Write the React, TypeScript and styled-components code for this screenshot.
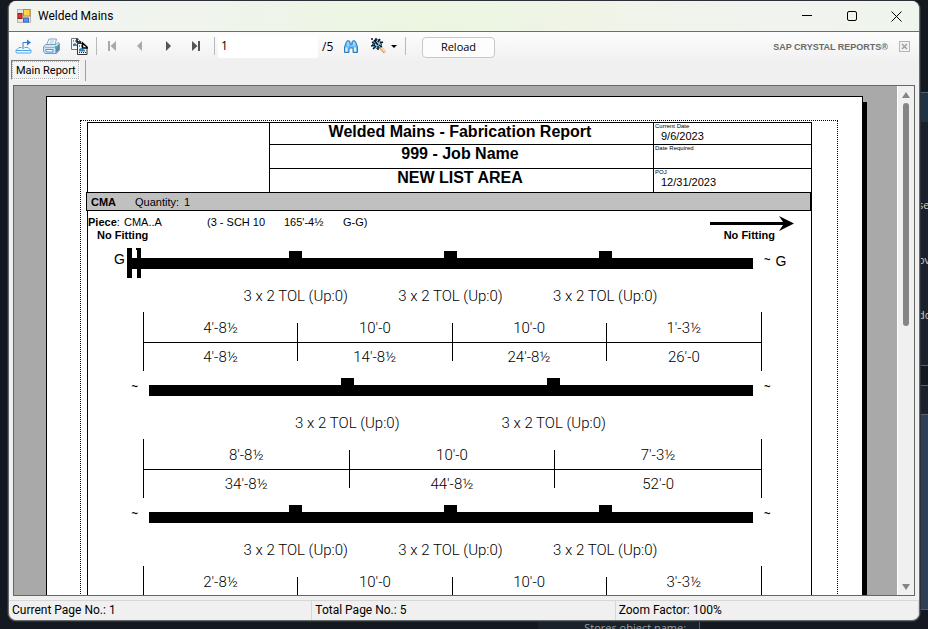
import React from "react";
import styled, { createGlobalStyle, css } from "styled-components";

const GlobalStyle = createGlobalStyle`
  *, *::before, *::after { box-sizing: border-box; }
  body {
    margin: 0;
    overflow: hidden;
    font-family: "Open Sans", "Noto Sans", sans-serif;
    font-size: 12px;
    color: #000;
  }
  button, input { font: inherit; color: inherit; }
`;

/* ---------- desktop and the windows behind ---------- */

const Desktop = styled.div`
  position: relative;
  height: 100vh;
  padding: 1px 8px 8px;
  overflow: hidden;
  background: #141820;
`;

const BehindRight = styled.div`
  position: absolute;
  top: 0;
  right: 0;
  bottom: 0;
  width: 12px;
  display: flex;
  flex-direction: column;
  font-size: 11px;
  line-height: 14px;
  color: #c9ced6;
`;

const BehindBand = styled.div<{ $h?: number; $bg: string; $line?: boolean }>`
  flex: ${(p) => (p.$h ? `0 0 ${p.$h}px` : "1 1 0")};
  background: ${(p) => p.$bg};
  border-top: ${(p) => (p.$line ? "1px solid #55606f" : "0")};
  overflow: hidden;
`;

const BehindWord = styled.div`
  margin-top: 41px;
  padding-left: 2px;
  white-space: nowrap;
  &:first-child { margin-top: 76px; }
`;

const BehindBottom = styled.div`
  position: absolute;
  left: 58%;
  bottom: 0;
  width: 162px;
  height: 8px;
  padding-left: 46px;
  overflow: hidden;
  background: #1b212b;
  border-right: 1px solid #55606f;
  color: #9aa0a8;
  font-size: 11px;
  line-height: 13px;
`;

/* ---------- window frame ---------- */

const Window = styled.main`
  position: relative;
  height: 100%;
  display: flex;
  flex-direction: column;
  overflow: hidden;
  background: #f0f0f0;
  border: 1px solid #666a68;
  border-top: 0;
  border-radius: 8px;
  box-shadow: 0 0 0 1px #2c3038;
`;

const TitleBar = styled.header`
  flex: 0 0 31px;
  display: flex;
  align-items: center;
  padding-left: 8px;
  background: linear-gradient(90deg, #f2f4f0 0%, #f0f4ed 22%, #ecf6e1 45%, #f0f4e8 65%, #f1f3ef 85%, #eff5ec 100%);
  border-bottom: 1px solid #6b706b;
`;

const Title = styled.h1`
  flex: 1;
  margin: 0 0 0 7px;
  font: 400 12px Roboto, "Open Sans", sans-serif;
`;

const CaptionButton = styled.button`
  width: 45px;
  height: 30px;
  padding: 0;
  display: grid;
  place-items: center;
  border: 0;
  background: none;
`;

const ToolBar = styled.div`
  flex: 0 0 28px;
  display: flex;
  align-items: center;
  padding: 0 9px 0 6px;
  background: linear-gradient(#fdfdfd, #f1f1f1);
`;

const ToolButton = styled.button<{ $w?: number }>`
  width: ${(p) => p.$w ?? 28}px;
  height: 26px;
  padding: 0;
  display: grid;
  place-items: center start;
  border: 0;
  background: none;
`;

const Separator = styled.span<{ $after: number }>`
  width: 1px;
  height: 18px;
  margin-right: ${(p) => p.$after}px;
  background: #b9b9b9;
`;

const PageInput = styled.input`
  width: 100px;
  height: 23px;
  padding: 0 3px 2px;
  border: 0;
  outline: 0;
  background: #fff;
`;

const PageTotal = styled.span`
  width: 26px;
  padding-left: 4px;
`;

const ReloadButton = styled.button`
  width: 73px;
  height: 21px;
  margin: 2px 0 0;
  padding: 0;
  font-size: 11px;
  line-height: 18px;
  border: 1px solid #c8c8c8;
  border-radius: 4px;
  background: #fdfdfd;
`;

const Brand = styled.span`
  margin-left: auto;
  padding-top: 2px;
  font: 700 9px "Liberation Sans", Arial, sans-serif;
  color: #6a6a6a;
`;

const CloseView = styled.button`
  width: 11px;
  height: 11px;
  margin-left: 11px;
  padding: 0;
  display: grid;
  border: 0;
  background: none;
`;

const TabRow = styled.div`
  flex: 0 0 25px;
  display: flex;
  align-items: flex-start;
  gap: 5px;
  padding-left: 2px;
`;

const Tab = styled.button`
  height: 20px;
  padding: 1px 3px 0 4px;
  font: 400 11px Roboto, "Open Sans", sans-serif;
  line-height: 18px;
  border: 1px solid;
  border-color: #7a7a7a #fff #fff #7a7a7a;
  outline: 1px dotted #b5b5b5;
  outline-offset: -2px;
  background: #f4f4f4;
`;

const TabDivider = styled.span`
  width: 1px;
  height: 21px;
  background: #a0a0a0;
`;

/* ---------- viewer ---------- */

const Viewer = styled.section`
  flex: 1 1 0;
  min-height: 0;
  margin: 0 4px 4px;
  display: flex;
  overflow: hidden;
  border: 1px solid #646864;
`;

const Canvas = styled.div`
  flex: 1;
  min-width: 0;
  overflow: hidden;
  padding: 10px 34px 0 32px;
  background: #a9a9a9;
`;

const ScrollBar = styled.div`
  flex: 0 0 17px;
  display: flex;
  flex-direction: column;
  align-items: center;
  background: #f0f0f0;
  border-left: 1px solid #fff;
`;

const ScrollButton = styled.button`
  width: 16px;
  height: 17px;
  padding: 0;
  display: grid;
  place-items: center;
  border: 0;
  background: none;
`;

const ScrollTrack = styled.div`
  flex: 1;
  width: 6px;
`;

const ScrollThumb = styled.div`
  height: 47%;
  border-radius: 3px;
  background: #858585;
`;

const Paper = styled.article`
  padding: 23px 24px 40px 33px;
  background: #fff;
  border: 1px solid #000;
  box-shadow: 4px 6px 0 #000;
  font-family: "Liberation Sans", Arial, sans-serif;
`;

const Margins = styled.div`
  padding: 1px 25px 0 6px;
  border: 1px dotted #000;
`;

const Report = styled.div`
  border: 1px solid #000;
`;

const ReportHeader = styled.header`
  display: grid;
  grid-template-columns: 182fr 384fr 157fr;
  grid-template-rows: 22px 24px 23px;
`;

const LogoCell = styled.div`
  grid-row: 1 / 4;
  border-right: 1px solid #000;
`;

const cellLine = css<{ $last?: boolean }>`
  border-bottom: ${(p) => (p.$last ? 0 : 1)}px solid #000;
`;

const HeadingCell = styled.h2<{ $last?: boolean }>`
  margin: 0;
  padding-right: 3px;
  ${cellLine}
  border-right: 1px solid #000;
  text-align: center;
  font-size: 16px;
  line-height: 17px;
`;

const DateCell = styled.div<{ $last?: boolean }>`
  ${cellLine}
  padding-left: 1px;
  font-size: 11px;
`;

const DateLabel = styled.div`
  font-size: 6px;
  line-height: 7px;
`;

const DateValue = styled.div`
  padding-left: 6px;
  line-height: 12px;
`;

const GroupHeader = styled.div`
  height: 19px;
  margin: 0 0 0 -2px;
  padding-left: 4px;
  display: grid;
  grid-template-columns: 44px 49px 1fr;
  align-items: center;
  font-size: 11px;
  background: #c0c0c0;
  border: 1px solid #000;
`;

const PieceRow = styled.div`
  display: grid;
  grid-template-columns: 36px 83px 77px 59px 1fr auto;
  align-items: start;
  height: 18px;
  padding: 5px 17px 0 0;
  font-size: 11px;
  line-height: 12px;
  white-space: nowrap;
`;

const FittingRow = styled.div`
  display: flex;
  justify-content: space-between;
  height: 22px;
  padding: 0 36px 0 9px;
  font-size: 11px;
  font-weight: 700;
  line-height: 12px;
`;

/* ---------- pipe drawing ---------- */

const Run = styled.section`
  height: 127px;
  font-family: Roboto, "Liberation Sans", sans-serif;
  font-size: 15px;
  font-weight: 300;
`;

const PipeRow = styled.div`
  display: grid;
  grid-template-columns: 53px 1fr 51px;
  grid-template-rows: 18px;
`;

const EndMark = styled.div<{ $side: "left" | "right" }>`
  display: flex;
  justify-content: ${(p) => (p.$side === "left" ? "flex-end" : "flex-start")};
  padding: ${(p) => (p.$side === "left" ? "0 3px 0 0" : "0 0 0 4px")};
  gap: 5px;
  font: 400 14px "Liberation Sans", Arial, sans-serif;
  line-height: 20px;
`;

const Tilde = styled.span`
  font-size: 11px;
  font-weight: 700;
  line-height: 17px;
`;

const FlangedEnd = styled.div`
  display: flex;
  justify-content: flex-end;
  align-items: flex-start;
  gap: 2px;
  font: 400 14px "Liberation Sans", Arial, sans-serif;
  line-height: 17px;
  svg { flex: none; margin-top: -3px; }
`;

const Pipe = styled.div`
  display: flex;
  flex-direction: column;
`;

const Outlets = styled.div<{ $n: number }>`
  display: grid;
  grid-template-columns: repeat(${(p) => p.$n}, 1fr);
  padding: 0 calc(50% / ${(p) => p.$n + 1});
  justify-items: center;
`;

const Outlet = styled.span`
  width: 13px;
  height: 7px;
  background: #000;
`;

const Bar = styled.div<{ $flanged?: boolean }>`
  height: 11px;
  margin: 0 7px 0 ${(p) => (p.$flanged ? 0 : 8)}px;
  background: #000;
`;

const LabelRow = styled.div`
  padding: 17px 51px 6px 53px;
  line-height: 20px;
  white-space: nowrap;
`;

const Dimensions = styled.div<{ $n: number }>`
  display: grid;
  grid-template-columns: repeat(${(p) => p.$n}, 1fr);
  height: 59px;
  margin: 0 49px 0 55px;
  padding: 11px 0 10px;
  border: solid #000;
  border-width: 0 1px;
`;

const DimensionCell = styled.div`
  text-align: center;
  line-height: 10px;
  border-right: 1px solid #000;
  &:last-child { border-right: 0; }
`;

const Step = styled.div`
  height: 20px;
  border-bottom: 1px solid #000;
`;

const Total = styled.div`
  height: 18px;
  padding-top: 9px;
`;

/* ---------- status bar ---------- */

const StatusBar = styled.footer`
  flex: 0 0 20px;
  display: grid;
  grid-template-columns: repeat(3, 1fr);
  border-top: 1px solid #d7d7d7;
  font-family: Roboto, "Open Sans", sans-serif;
  line-height: 19px;
`;

const StatusPane = styled.span`
  padding-left: 3px;
  border-right: 1px solid #d7d7d7;
`;

/* ---------- icons ---------- */

const AppIcon = () => (
  <svg width="14" height="14" viewBox="0 0 14 14" aria-hidden="true">
    <rect x="0.5" y="0.5" width="13" height="13" fill="#e4e4e4" stroke="#b4b4b4" />
    <rect x="6.5" y="0.500" width="6.500" height="6.500" fill="#ffd54a" stroke="#c98a14" />
    <rect x="1" y="4.500" width="4" height="5" fill="#d8392b" stroke="#9c1c14" />
    <rect x="6.500" y="9" width="5" height="4" fill="#5b93f0" stroke="#3568c8" />
  </svg>
);

const ExportIcon = () => (
  <svg width="17" height="15" viewBox="0 0 17 15" aria-hidden="true" fill="none">
    <path d="M6.500 8.500H4L1 11.500V13q0 1 1 1h13q1 0 1-1v-1.500L13 8.500H9.500" fill="#f4faff" stroke="#4aa6ee" />
    <path d="M1 11.500h15" stroke="#4aa6ee" />
    <path d="M8 10V3.500h5" stroke="#2b7fce" />
    <path d="M12 0.500 16 3.500 12 6.500z" fill="#2b7fce" />
  </svg>
);

const PrintIcon = () => (
  <svg width="17" height="16" viewBox="0 0 17 16" aria-hidden="true">
    <path d="M6 1h7.500L12 7H3.500z" fill="#eef7ff" stroke="#8ba4b8" />
    <path d="M7 3h4M6.500 5h4" stroke="#9fd0f3" />
    <path d="M2.500 6.500H13l2-2 1.500 1V12l-3 3.500H2L0.500 13V9z" fill="#cfe4f4" stroke="#7d9cb8" />
    <path d="M1.500 9.500h11" stroke="#8ab8dc" />
    <path d="M2.500 11.500h7.500v2.500H3.500z" fill="#fff" stroke="#3b9be6" />
    <path d="M12.500 9.500 16 6v6l-3.500 3.500z" fill="#5d7fb4" />
    <rect x="12" y="8" width="2.500" height="2.500" fill="#35bd8a" />
  </svg>
);

const CopyIcon = () => (
  <svg width="17" height="17" viewBox="0 0 17 17" aria-hidden="true">
    <path d="M0.500 0.500h6l3 3v8h-9z" fill="#f4f8fb" stroke="#777" />
    <path d="M6 0.500v3.500h4" fill="none" stroke="#000" strokeWidth="1.500" />
    <path d="M2 3h3" stroke="#333" strokeDasharray="1 1" />
    <path d="M2 8V6l2-1 2 2v1z" fill="#2a86c8" />
    <path d="M6.500 5.500h5.500l4 4v7h-9.500z" fill="#f4f8fb" stroke="#333" />
    <path d="M11.500 5v5H16V9z" fill="#fff" stroke="#000" strokeWidth="1.500" />
    <path d="M8 8h3M8 14.500h7" stroke="#222" strokeDasharray="1 1" />
    <path d="M8 13.500V11l2-1 4 2v1.500z" fill="#2a86c8" />
  </svg>
);

const NavIcon = ({ dir, stop, dim }: { dir: "l" | "r"; stop?: boolean; dim?: boolean }) => {
  const color = dim ? "#a9a9a9" : "#555";
  return (
    <svg width="8" height="10" viewBox="0 0 8 10" aria-hidden="true" fill={color}>
      {dir === "l" ? <path d={stop ? "M8 0v10L2.500 5z" : "M6 0v10L1 5z"} /> : <path d={stop ? "M0 0v10L5.500 5z" : "M2 0v10L7 5z"} />}
      {stop && <rect x={dir === "l" ? 0 : 6} y="0" width="2" height="10" />}
    </svg>
  );
};

const FindIcon = () => (
  <svg width="14" height="13" viewBox="0 0 14 13" aria-hidden="true">
    <path d="M2.500 1.500 4 0.500l2 1V4h2V1.500l2-1 1.500 1 2 5.500v5.500H9V8H5v4.500H0.500V7z" fill="#69bdf2" stroke="#2a7cc4" />
    <path d="M2.500 7.500v4M11 7.500v4" stroke="#e6f3d8" strokeWidth="2" />
    <path d="M4 2v4M10 2v4" stroke="#d3edfd" />
  </svg>
);

const ZoomIcon = () => (
  <svg width="26" height="16" viewBox="0 0 26 16" aria-hidden="true">
    <path d="m9 9 5 5.500" stroke="#d99a5b" strokeWidth="3" />
    <path d="m10 9.500 4 4.500" stroke="#fbe0bd" strokeWidth="1.500" />
    <circle cx="6" cy="6" r="4.500" fill="#8ccff4" stroke="#1d4a70" strokeDasharray="2 1" />
    <path d="M0 1h2M5 0v3M9 1 7 4M1 4l3 2M0 8l4-1M2 11l3-3M7 12V8M11 9 8 7M12 4 9 5M3 2l4 5" stroke="#0a1420" strokeWidth="1.500" />
    <path d="M20 7h6l-3 3z" fill="#000" />
  </svg>
);

const FlangeIcon = () => (
  <svg width="14" height="30" viewBox="0 0 14 30" aria-hidden="true">
    <path d="M0 0h5v10h5V2H9V0h5v30h-4V21H5v9H0z" fill="#000" />
  </svg>
);

const FlowArrow = () => (
  <svg width="84" height="15" viewBox="0 0 84 15" aria-hidden="true">
    <path d="M0 6h73L69 0l15 7.500L69 15l4-6H0z" fill="#000" />
  </svg>
);

/* ---------- data ---------- */

type RunData = { flanged?: boolean; end?: string; steps: [string, string?][] };

const runs: RunData[] = [
  { flanged: true, end: "G", steps: [["4'-8½", "4'-8½"], ["10'-0", "14'-8½"], ["10'-0", "24'-8½"], ["1'-3½", "26'-0"]] },
  { steps: [["8'-8½", "34'-8½"], ["10'-0", "44'-8½"], ["7'-3½", "52'-0"]] },
  { steps: [["2'-8½"], ["10'-0"], ["10'-0"], ["3'-3½"]] },
];

const PipeRun = ({ flanged, end, steps }: RunData) => {
  const outlets = steps.slice(1);
  return (
    <Run>
      <PipeRow>
        {flanged ? (
          <FlangedEnd><span>G</span><FlangeIcon /></FlangedEnd>
        ) : (
          <EndMark $side="left"><Tilde>~</Tilde></EndMark>
        )}
        <Pipe>
          <Outlets $n={outlets.length}>
            {outlets.map((_, i) => <Outlet key={i} />)}
          </Outlets>
          <Bar $flanged={flanged} />
        </Pipe>
        <EndMark $side="right"><Tilde>~</Tilde>{end && <span>{end}</span>}</EndMark>
      </PipeRow>
      <LabelRow>
        <Outlets $n={outlets.length}>
          {outlets.map((_, i) => <span key={i}>3 x 2 TOL (Up:0)</span>)}
        </Outlets>
      </LabelRow>
      <Dimensions $n={steps.length}>
        {steps.map(([step, total], i) => (
          <DimensionCell key={i}>
            <Step>{step}</Step>
            <Total>{total}</Total>
          </DimensionCell>
        ))}
      </Dimensions>
    </Run>
  );
};

export default function App() {
  return (
    <Desktop>
      <GlobalStyle />
      <BehindRight>
        <BehindBand $h={92} $bg="#14181f" />
        <BehindBand $h={30} $bg="#1f3344" $line />
        <BehindBand $h={243} $bg="#1a212b">
          <BehindWord>se</BehindWord>
          <BehindWord>ov</BehindWord>
          <BehindWord>do</BehindWord>
        </BehindBand>
        <BehindBand $h={20} $bg="#14181f" $line />
        <BehindBand $h={29} $bg="#1a212b" $line />
        <BehindBand $bg="#2f3f55" $line />
        <BehindBand $h={20} $bg="#141820" $line />
      </BehindRight>
      <BehindBottom>Stores object name:</BehindBottom>

      <Window>
        <TitleBar>
          <AppIcon />
          <Title>Welded Mains</Title>
          <CaptionButton aria-label="Minimize">
            <svg width="10" height="10" aria-hidden="true"><path d="M0 4.500h10" stroke="#000" /></svg>
          </CaptionButton>
          <CaptionButton aria-label="Maximize">
            <svg width="10" height="10" aria-hidden="true"><rect x="0.500" y="0.500" width="9" height="9" rx="1.500" fill="none" stroke="#000" /></svg>
          </CaptionButton>
          <CaptionButton aria-label="Close">
            <svg width="11" height="11" aria-hidden="true"><path d="m0.500 0.500 10 10m0-10-10 10" stroke="#000" /></svg>
          </CaptionButton>
        </TitleBar>

        <ToolBar>
          <ToolButton aria-label="Export report"><ExportIcon /></ToolButton>
          <ToolButton aria-label="Print report"><PrintIcon /></ToolButton>
          <ToolButton $w={25} aria-label="Copy"><CopyIcon /></ToolButton>
          <Separator $after={11} />
          <ToolButton aria-label="First page"><NavIcon dir="l" stop dim /></ToolButton>
          <ToolButton aria-label="Previous page"><NavIcon dir="l" dim /></ToolButton>
          <ToolButton aria-label="Next page"><NavIcon dir="r" /></ToolButton>
          <ToolButton $w={22} aria-label="Last page"><NavIcon dir="r" stop /></ToolButton>
          <Separator $after={3} />
          <PageInput aria-label="Page number" defaultValue="1" />
          <PageTotal>/5</PageTotal>
          <ToolButton $w={27} aria-label="Find text"><FindIcon /></ToolButton>
          <ToolButton $w={34} aria-label="Zoom"><ZoomIcon /></ToolButton>
          <Separator $after={16} />
          <ReloadButton>Reload</ReloadButton>
          <Brand>SAP CRYSTAL REPORTS®</Brand>
          <CloseView aria-label="Close view">
            <svg width="11" height="11" aria-hidden="true">
              <rect x="0.500" y="0.500" width="10" height="10" fill="#f3f3f3" stroke="#b5b5b5" />
              <path d="m3 3 5 5m0-5-5 5" stroke="#a0a0a0" strokeWidth="1.500" />
            </svg>
          </CloseView>
        </ToolBar>

        <TabRow>
          <Tab>Main Report</Tab>
          <TabDivider />
        </TabRow>

        <Viewer>
          <Canvas>
            <Paper>
              <Margins>
                <Report>
                  <ReportHeader>
                    <LogoCell />
                    <HeadingCell>Welded Mains - Fabrication Report</HeadingCell>
                    <DateCell>
                      <DateLabel>Current Date</DateLabel>
                      <DateValue>9/6/2023</DateValue>
                    </DateCell>
                    <HeadingCell>999 - Job Name</HeadingCell>
                    <DateCell><DateLabel>Date Required</DateLabel></DateCell>
                    <HeadingCell $last>NEW LIST AREA</HeadingCell>
                    <DateCell $last>
                      <DateLabel>POJ</DateLabel>
                      <DateValue>12/31/2023</DateValue>
                    </DateCell>
                  </ReportHeader>
                  <GroupHeader>
                    <b>CMA</b>
                    <span>Quantity:</span>
                    <span>1</span>
                  </GroupHeader>
                  <PieceRow>
                    <span><b>Piece</b>:</span>
                    <span>CMA..A</span>
                    <span>(3 - SCH 10</span>
                    <span>165'-4½</span>
                    <span>G-G)</span>
                    <FlowArrow />
                  </PieceRow>
                  <FittingRow>
                    <span>No Fitting</span>
                    <span>No Fitting</span>
                  </FittingRow>
                  {runs.map((run, i) => <PipeRun key={i} {...run} />)}
                </Report>
              </Margins>
            </Paper>
          </Canvas>
          <ScrollBar>
            <ScrollButton aria-label="Scroll up">
              <svg width="8" height="6" aria-hidden="true"><path d="M4 0 8 6H0z" fill="#858585" /></svg>
            </ScrollButton>
            <ScrollTrack><ScrollThumb /></ScrollTrack>
            <ScrollButton aria-label="Scroll down">
              <svg width="8" height="6" aria-hidden="true"><path d="M0 0h8L4 6z" fill="#858585" /></svg>
            </ScrollButton>
          </ScrollBar>
        </Viewer>

        <StatusBar>
          <StatusPane>Current Page No.: 1</StatusPane>
          <StatusPane>Total Page No.: 5</StatusPane>
          <StatusPane>Zoom Factor: 100%</StatusPane>
        </StatusBar>
      </Window>
    </Desktop>
  );
}
